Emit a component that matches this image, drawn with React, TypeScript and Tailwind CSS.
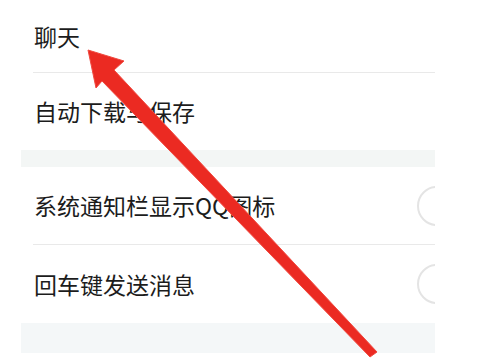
import type { ReactNode } from 'react';

function Row({
  children,
  height,
  border,
  toggle,
}: {
  children: ReactNode;
  height: string;
  border?: boolean;
  toggle?: boolean;
}) {
  return (
    <div className="bg-white pl-[12px]">
      <div
        className={`${height} flex items-center justify-between pl-[1px] ${
          border ? 'border-b border-[#e9e9e9]' : ''
        }`}
      >
        <span className="text-[23px] leading-none text-[#1c1c1c]">{children}</span>
        {toggle && (
          <span className="mr-[-22px] h-[40px] w-[40px] shrink-0 rounded-full border-2 border-[#e4e4e4] bg-white" />
        )}
      </div>
    </div>
  );
}

function Arrow() {
  return (
    <svg
      className="pointer-events-none absolute left-0 top-0"
      width="501"
      height="363"
      viewBox="0 0 501 363"
    >
      <polygon
        points="88,50 124,61 114,70 377,352 370,357 102,81 96,88"
        fill="#eb2a22"
        stroke="#f04a40"
        strokeWidth="1"
        strokeLinejoin="round"
      />
    </svg>
  );
}

export default function App() {
  return (
    <div
      className="relative h-[363px] w-[501px] overflow-hidden bg-white"
      style={{ fontFamily: '"Noto Sans CJK SC", "Noto Sans", sans-serif' }}
    >
      <div className="ml-[21px] w-[414px] overflow-hidden">
        <Row height="h-[73px]" border>
          聊天
        </Row>
        <Row height="h-[77px]">自动下载与保存</Row>
        <div className="h-[17px] bg-[#f3f6f5]" />
        <Row height="h-[78px]" border toggle>
          系统通知栏显示QQ图标
        </Row>
        <Row height="h-[78px]" toggle>
          回车键发送消息
        </Row>
        <div className="h-[30px] bg-[#f4f7f8]" />
      </div>
      <Arrow />
    </div>
  );
}
